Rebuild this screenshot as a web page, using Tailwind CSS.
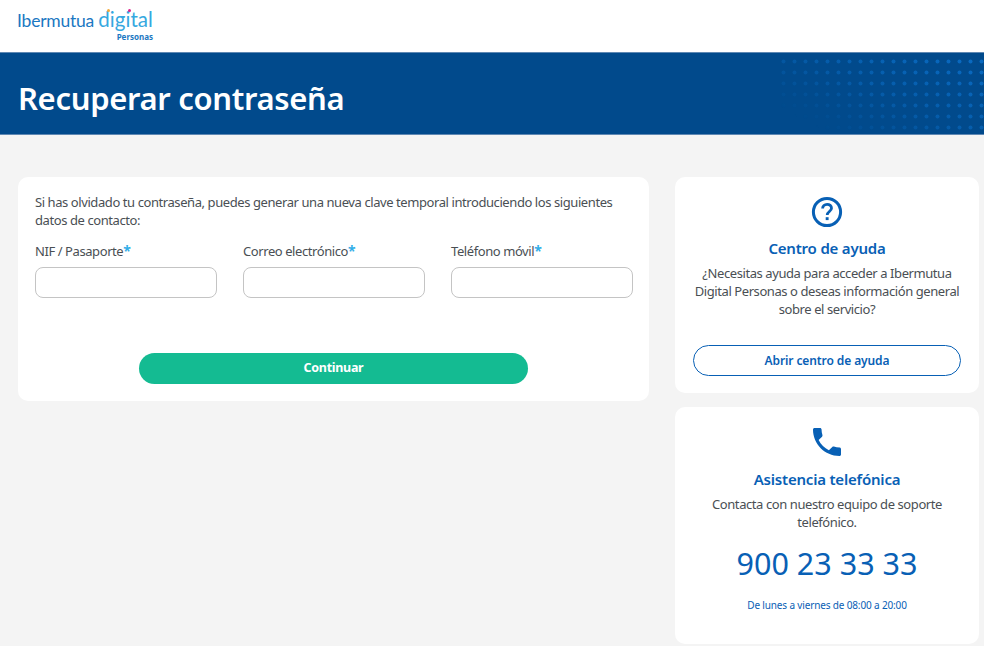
<!DOCTYPE html>
<html lang="es">
<head>
<meta charset="utf-8">
<script src="https://cdn.jsdelivr.net/npm/@tailwindcss/browser@4"></script>
<title>Recuperar contraseña</title>
</head>
<body class="w-[984px] h-[646px] overflow-hidden bg-[#f4f4f4] font-['Noto_Sans',sans-serif] text-[#4a4f54]">
<header class="h-[52px] bg-white flex items-start pl-[17px] pt-[8px]">
  <div class="flex flex-col items-end w-[136px]">
    <div class="relative flex items-baseline justify-between w-full h-[22px] leading-[22px] whitespace-nowrap">
      <span class="text-[17.5px] tracking-[-0.22px] text-[#1b78c2] font-['Lato',sans-serif]">Ibermutua</span>
      <span class="text-[20.5px] tracking-[0.05px] text-[#35a8e0] font-['Lato',sans-serif]">digital</span>
      <span class="absolute left-[90px] top-[1px] w-[3px] h-[3px] rounded-full bg-[#f2a93b]"></span>
      <span class="absolute left-[111px] top-[1px] w-[3px] h-[3px] rounded-full bg-[#e0218a]"></span>
    </div>
    <span class="mt-[2px] text-[8px] leading-[10px] font-bold text-[#1b78c2]">Personas</span>
  </div>
</header>
<section class="relative h-[83px] bg-[#014a8c] border-y border-y-[#5f88b3] flex items-center pl-[18px] pt-[8px] overflow-hidden">
  <h1 class="text-[31px] leading-[44px] font-semibold text-white tracking-[-0.32px]">Recuperar contraseña</h1>
  <svg class="absolute right-0 top-0" width="204" height="81" viewBox="0 0 204 81" aria-hidden="true">
    <defs>
      <pattern id="dots" x="0" y="0" width="11" height="11" patternUnits="userSpaceOnUse">
        <circle cx="3.5" cy="8.5" r="2" fill="#0a6cc4"/>
      </pattern>
      <linearGradient id="fade" x1="1" y1="0" x2="0.05" y2="0.75">
        <stop offset="0" stop-color="#fff"/>
        <stop offset="0.55" stop-color="#fff" stop-opacity="0.55"/>
        <stop offset="1" stop-color="#fff" stop-opacity="0"/>
      </linearGradient>
      <mask id="m"><rect width="204" height="81" fill="url(#fade)"/></mask>
    </defs>
    <rect width="204" height="81" fill="url(#dots)" mask="url(#m)"/>
  </svg>
</section>
<main class="flex items-start gap-[26px] pl-[18px] pr-[5px] pt-[42px]">
  <div class="w-[631px] h-[224px] bg-white rounded-[10px] pl-[17px] pr-[16px] pt-[16px] flex flex-col">
    <p class="text-[13px] tracking-[-0.42px] leading-[18px] w-[590px]">Si has olvidado tu contraseña, puedes generar una nueva clave temporal introduciendo los siguientes datos de contacto:</p>
    <div class="grid grid-cols-3 gap-[26px] mt-[12px]">
      <label class="flex flex-col">
        <span class="text-[13px] tracking-[-0.42px] leading-[20px]">NIF / Pasaporte<span class="text-[#33aee8] font-bold text-[14px] leading-none">*</span></span>
        <input type="text" class="mt-[6px] h-[31px] w-full bg-white border border-[#c4c4c4] rounded-[8px]">
      </label>
      <label class="flex flex-col">
        <span class="text-[13px] tracking-[-0.42px] leading-[20px]">Correo electrónico<span class="text-[#33aee8] font-bold text-[14px] leading-none">*</span></span>
        <input type="text" class="mt-[6px] h-[31px] w-full bg-white border border-[#c4c4c4] rounded-[8px]">
      </label>
      <label class="flex flex-col">
        <span class="text-[13px] tracking-[-0.42px] leading-[20px]">Teléfono móvil<span class="text-[#33aee8] font-bold text-[14px] leading-none">*</span></span>
        <input type="text" class="mt-[6px] h-[31px] w-full bg-white border border-[#c4c4c4] rounded-[8px]">
      </label>
    </div>
    <button class="ml-[104px] mt-[55px] w-[389px] h-[31px] rounded-full bg-[#14bb92] text-white text-[12.5px] font-bold tracking-[-0.3px]">Continuar</button>
  </div>
  <aside class="w-[304px] flex flex-col gap-[14px]">
    <div class="h-[216px] bg-white rounded-[10px] px-[12px] pt-[19px] flex flex-col items-center text-center">
      <svg width="32" height="32" viewBox="0 0 32 32" fill="none" aria-hidden="true">
        <circle cx="16" cy="16" r="13.6" stroke="#0860b5" stroke-width="3"/>
        <path d="M11.6 12.6c0-2.6 2-4.3 4.5-4.3s4.4 1.6 4.4 3.9c0 3.2-4.3 3.4-4.3 6.8" stroke="#0860b5" stroke-width="2.8"/>
        <rect x="14.7" y="21.2" width="2.9" height="2.9" fill="#0860b5"/>
      </svg>
      <h2 class="mt-[9px] text-[15px] tracking-[-0.2px] leading-[22px] font-semibold text-[#0860b5]">Centro de ayuda</h2>
      <p class="mt-[5px] text-[13px] tracking-[-0.42px] leading-[18px]">¿Necesitas ayuda para acceder a Ibermutua<br>Digital Personas o deseas información general<br>sobre el servicio?</p>
      <button class="mt-[27px] w-[268px] h-[31px] rounded-full border border-[#0860b5] text-[#0860b5] text-[12px] tracking-[-0.1px] font-semibold bg-white">Abrir centro de ayuda</button>
    </div>
    <div class="h-[237px] bg-white rounded-[10px] px-[12px] pt-[21px] flex flex-col items-center text-center">
      <svg width="28" height="28" viewBox="3 3 18 18" aria-hidden="true">
        <path fill="#0860b5" d="M6.62 10.79c1.44 2.83 3.76 5.14 6.59 6.59l2.2-2.2c.27-.27.67-.36 1.02-.24 1.12.37 2.33.57 3.57.57.55 0 1 .45 1 1V20c0 .55-.45 1-1 1-9.39 0-17-7.61-17-17 0-.55.45-1 1-1h3.5c.55 0 1 .45 1 1 0 1.25.2 2.45.57 3.57.11.35.03.74-.25 1.02l-2.2 2.2z"/>
      </svg>
      <h2 class="mt-[12px] text-[15px] tracking-[-0.2px] leading-[22px] font-semibold text-[#0860b5]">Asistencia telefónica</h2>
      <p class="mt-[5px] text-[13px] tracking-[-0.42px] leading-[18px]">Contacta con nuestro equipo de soporte<br>telefónico.</p>
      <p class="mt-[11px] text-[30.5px] leading-[42px] text-[#0860b5]">900 23 33 33</p>
      <p class="mt-[14px] text-[10px] tracking-[-0.15px] leading-[14px] text-[#0860b5]">De lunes a viernes de 08:00 a 20:00</p>
    </div>
  </aside>
</main>
</body>
</html>
